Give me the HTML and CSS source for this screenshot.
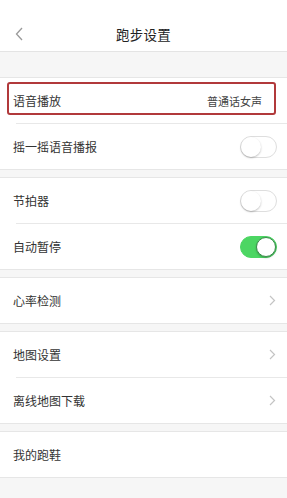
FILE: index.html
```html
<!DOCTYPE html>
<html lang="zh">
<head>
<meta charset="utf-8">
<link rel="stylesheet" href="styles.css">
</head>
<body>
<div class="page">
  <header class="topbar">
    <svg class="back" width="8" height="14" viewBox="0 0 8 14"><path d="M7 1 L1.5 7 L7 13" fill="none" stroke="#9a9a9a" stroke-width="1.3"/></svg>
    <div class="title">跑步设置</div>
  </header>
  <div class="spacer"></div>

  <section class="group">
    <div class="row highlight">
      <span class="label">语音播放</span>
      <span class="value">普通话女声</span>
      <div class="mark"></div>
    </div>
    <div class="row">
      <span class="label">摇一摇语音播报</span>
      <span class="switch"><span class="knob"></span></span>
    </div>
  </section>

  <section class="group">
    <div class="row">
      <span class="label">节拍器</span>
      <span class="switch"><span class="knob"></span></span>
    </div>
    <div class="row">
      <span class="label">自动暂停</span>
      <span class="switch on"><span class="knob"></span></span>
    </div>
  </section>

  <section class="group">
    <div class="row">
      <span class="label">心率检测</span>
      <svg class="chev" width="7" height="11" viewBox="0 0 7 11"><path d="M1 1 L5.5 5.5 L1 10" fill="none" stroke="#c4c4c4" stroke-width="1.2"/></svg>
    </div>
  </section>

  <section class="group">
    <div class="row">
      <span class="label">地图设置</span>
      <svg class="chev" width="7" height="11" viewBox="0 0 7 11"><path d="M1 1 L5.5 5.5 L1 10" fill="none" stroke="#c4c4c4" stroke-width="1.2"/></svg>
    </div>
    <div class="row">
      <span class="label">离线地图下载</span>
      <svg class="chev" width="7" height="11" viewBox="0 0 7 11"><path d="M1 1 L5.5 5.5 L1 10" fill="none" stroke="#c4c4c4" stroke-width="1.2"/></svg>
    </div>
  </section>

  <section class="group">
    <div class="row">
      <span class="label">我的跑鞋</span>
    </div>
  </section>
</div>
</body>
</html>
```

FILE: styles.css
```css
* { box-sizing: border-box; margin: 0; padding: 0; }
html, body { background: #f6f6f6; }
body {
  font-family: "Noto Sans CJK SC", "Noto Sans", sans-serif;
  color: #333;
  width: 287px;
  height: 498px;
  overflow: hidden;
}
.topbar {
  height: 52px;
  background: #fff;
  border-bottom: 1px solid #e4e4e4;
  position: relative;
  display: flex;
  align-items: center;
  justify-content: center;
  padding-top: 16px;
}
.back { position: absolute; left: 15px; top: 27px; }
.title { font-size: 13.5px; color: #222; letter-spacing: 0.3px; }
.spacer { height: 25px; }
.group {
  background: #fff;
  border-top: 1px solid #e6e6e6;
  border-bottom: 1px solid #e6e6e6;
  margin-bottom: 7px;
}
.row {
  height: 45px;
  display: flex;
  align-items: center;
  justify-content: space-between;
  padding: 0 10px 0 13px;
  position: relative;
}
.row + .row {
  height: 46px;
  padding-top: 1px;
}
.row + .row::before {
  content: "";
  position: absolute;
  left: 16px;
  right: 0;
  top: 0;
  height: 1px;
  background: #e8e8e8;
}
.label { font-size: 12px; color: #333; }
.value { font-size: 11px; color: #444; margin-right: 15px; }
.highlight .mark {
  position: absolute;
  left: 7px;
  top: 4px;
  width: 269px;
  height: 33px;
  border: 2px solid #b1393b;
  border-radius: 3px;
}
.switch {
  width: 37px;
  height: 22px;
  border-radius: 11px;
  border: 1px solid #dedede;
  background: #fff;
  position: relative;
}
.switch .knob {
  position: absolute;
  left: 0;
  top: 0;
  width: 20px;
  height: 20px;
  border-radius: 50%;
  background: #fff;
  box-shadow: 0 1px 2px rgba(0,0,0,0.25);
}
.switch.on { background: #4cd663; border-color: #4cd663; }
.switch.on .knob { left: 15px; border: 1px solid #3c8a4c; }
.chev { margin-right: 1px; }
```
